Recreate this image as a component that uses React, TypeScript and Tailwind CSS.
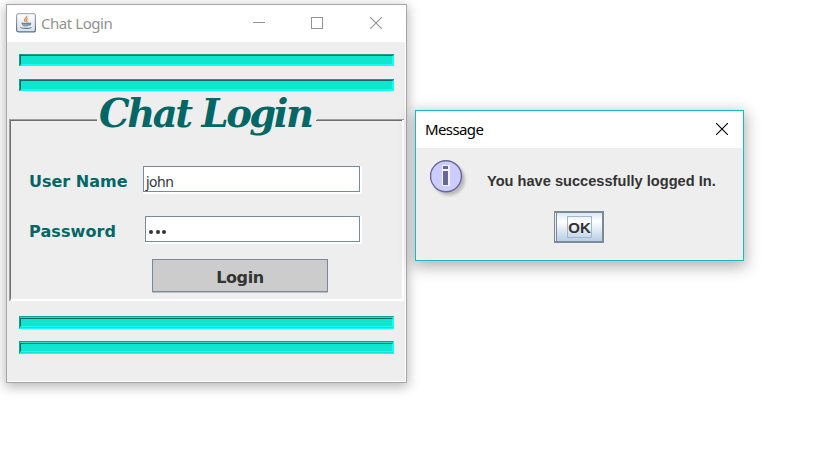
import React from "react";

function TopBar() {
  return (
    <div className="h-[12px] w-[375px] border-t border-l border-[#0ea192] bg-[#12e5cd]">
      <div className="h-[11px] w-[374px] border-t border-l border-r-2 border-b-2 border-t-[#0b6e64] border-l-[#0b6e64] border-r-[#12ffff] border-b-[#12ffff]" />
    </div>
  );
}

function BottomBar() {
  return (
    <div className="h-[13px] w-[375px] border border-t-[#0ea192] border-l-[#0ea192] border-r-[#12ffff] border-b-[#12ffff] bg-[#12e5cd] pt-px">
      <div className="h-[9px] w-[373px] border border-t-[#0b6e64] border-l-[#0b6e64] border-r-[#12ffff] border-b-[#12ffff]" />
    </div>
  );
}

function JavaIcon() {
  return (
    <svg width="20" height="20" viewBox="0 0 20 20" fill="none">
      <defs>
        <linearGradient id="javaFace" x1="0" y1="0" x2="0" y2="1">
          <stop offset="0" stopColor="#ffffff" />
          <stop offset="1" stopColor="#d9e0e7" />
        </linearGradient>
        <linearGradient id="javaEdge" x1="0" y1="0" x2="0" y2="1">
          <stop offset="0" stopColor="#a9b3bd" />
          <stop offset="1" stopColor="#587087" />
        </linearGradient>
      </defs>
      <rect x=".6" y=".6" width="18.8" height="18.3" rx="2" fill="url(#javaFace)" stroke="url(#javaEdge)" strokeWidth="1.2" />
      <path d="M10.7 2.8c.8 2-2.8 2.8-2.2 4.5.2.7 1 1.2 1 2M12 5.5c-2 .8-1.9 1.7-1.2 2.4.4.4.2 1-.3 1.4" stroke="#e98b4a" strokeWidth="1.3" />
      <path d="M5.5 10c1.5.7 6.5.6 8 0M6.5 10.5c.2 2 .8 2.5 3.2 2.5 2.2 0 2.8-.6 3.2-2.5M13.3 10.2c1.9-.5 1.9 1.6-.6 2" stroke="#6482a0" strokeWidth="1.2" />
      <path d="M7 11.7h5.5" stroke="#8ba1b6" strokeWidth="1.4" />
      <path d="M5 14.2c-1.3 1.4 9 1.7 10.5.1" stroke="#6482a0" strokeWidth="1.2" />
    </svg>
  );
}

function InfoIcon() {
  return (
    <svg width="40" height="40" viewBox="0 0 40 40" fill="none">
      <defs>
        <filter id="infoShade" x="-30%" y="-30%" width="160%" height="160%">
          <feGaussianBlur stdDeviation="1.5" />
        </filter>
      </defs>
      <circle cx="19" cy="19.5" r="16" fill="#888" opacity=".5" filter="url(#infoShade)" />
      <circle cx="16" cy="16.2" r="15.5" fill="#ccccff" stroke="#666699" strokeWidth="1.4" />
      <path d="M12 5h8v21h-8z" fill="#f1f1ff" />
      <path d="M13 6h5v3h-5zM13 11h5v14h-5z" fill="#666699" />
    </svg>
  );
}

function Cross() {
  return (
    <svg width="12" height="12" viewBox="0 0 12 12" fill="none" stroke="currentColor" strokeWidth="1.1">
      <path d="M0 0l12 12M12 0L0 12" />
    </svg>
  );
}

function Field({ children, wide }: { children: React.ReactNode; wide?: boolean }) {
  return (
    <div className={`h-[28px] bg-white pr-[2px] pb-[2px] ${wide ? "w-[219px]" : "w-[217px]"}`}>
      <div className="h-[26px] border border-[#7a8a99] bg-white pl-[2px]">{children}</div>
    </div>
  );
}

function LoginWindow() {
  return (
    <section className="absolute left-[6px] top-[4px] h-[379px] w-[401px] border border-[#a6a6a6] bg-white pr-px pb-px shadow-[0_3px_11px_1px_rgba(0,0,0,0.28)]">
      <div className="flex h-full flex-col bg-[#eeeeee]">
        <header className="-mr-px flex h-[37px] shrink-0 bg-white pl-[9px] text-[#929292]">
          <div className="pt-[8px]">
            <JavaIcon />
          </div>
          <span className="ml-[5px] w-[208px] pt-[8px] font-['Noto_Sans','Open_Sans',sans-serif] text-[15px] leading-[20px] tracking-[-0.45px]">
            Chat Login
          </span>
          <div className="ml-[4px] mt-[17px] h-px w-[12px] bg-current" />
          <div className="ml-[46px] mt-[12px] h-[12px] w-[12px] border border-current" />
          <div className="ml-[47px] pt-[12px]">
            <Cross />
          </div>
        </header>
        <div className="mt-[12px] ml-[12px] flex flex-col gap-[13px]">
          <TopBar />
          <TopBar />
        </div>
        <div className="ml-[2px] mt-[4px] flex h-[206px] w-[395px] flex-col">
          <div className="flex h-[25px] shrink-0 items-end">
            <div className="h-px w-[88px] bg-[#a0a0a0]" />
            <div className="flex h-[25px] w-[220px] items-start overflow-visible">
              <h1 className="whitespace-nowrap pl-[2px] font-['DejaVu_Serif',serif] text-[38.5px] leading-[37px] font-bold italic tracking-[-2.45px] text-[#006666]">
                Chat Login
              </h1>
            </div>
            <div className="h-px w-[87px] bg-[#a0a0a0]" />
          </div>
          <div className="flex h-[181px] border-l border-l-[#a0a0a0]">
            <div className="flex w-[394px] flex-col border-r-2 border-b-2 border-l border-l-[#707070] border-r-white border-b-white">
              <div className="flex h-px shrink-0 justify-between">
                <div className="h-px w-[86px] bg-[#707070]" />
                <div className="h-px w-[86px] bg-[#707070]" />
              </div>
              <div className="mt-[45px] flex h-[28px] pl-[18px]">
                <label className="w-[114px] whitespace-nowrap font-['DejaVu_Sans',sans-serif] text-[16px] leading-[31px] font-bold tracking-[0px] text-[#006666]">
                  User Name
                </label>
                <Field wide>
                  <span className="block font-['Noto_Sans','Open_Sans',sans-serif] text-[14px] leading-[29px] tracking-[-0.5px] text-[#333]">john</span>
                </Field>
              </div>
              <div className="mt-[22px] flex h-[28px] pl-[18px]">
                <label className="w-[116px] whitespace-nowrap font-['DejaVu_Sans',sans-serif] text-[16px] leading-[31px] font-bold tracking-[0.1px] text-[#006666]">
                  Password
                </label>
                <Field>
                  <div className="flex h-full items-center gap-[2.5px] pl-px pt-[5px]">
                    <i className="size-[4px] rounded-full bg-[#333]" />
                    <i className="size-[4px] rounded-full bg-[#333]" />
                    <i className="size-[4px] rounded-full bg-[#333]" />
                  </div>
                </Field>
              </div>
              <div className="mt-[15px] ml-[141px] h-[34px] w-[176px] bg-[#bfc3c7] pb-px">
                <button className="block h-[33px] w-[176px] border border-[#7a8a99] bg-[#cccccc] pt-px font-['DejaVu_Sans',sans-serif] text-[16px] leading-[34px] font-bold tracking-[-0.4px] text-[#333]">
                  Login
                </button>
              </div>
            </div>
          </div>
        </div>
        <div className="mt-[15px] ml-[12px] flex flex-col gap-[12px]">
          <BottomBar />
          <BottomBar />
        </div>
      </div>
    </section>
  );
}

function MessageWindow() {
  return (
    <section className="absolute left-[415px] top-[110px] h-[151px] w-[329px] border border-[#16bac5] bg-[#eeeeee] shadow-[0_4px_14px_2px_rgba(0,0,0,0.3)]">
      <header className="flex h-[37px] justify-between bg-white pl-[9px] pr-[15px] text-black">
        <span className="pt-[8px] font-['Noto_Sans','Open_Sans',sans-serif] text-[15px] leading-[20px] tracking-[-0.6px]">
          Message
        </span>
        <div className="pt-[12px]">
          <Cross />
        </div>
      </header>
      <div className="flex h-[63px] pl-[14px] pt-[12px]">
        <InfoIcon />
        <p className="ml-[17px] pt-[11px] whitespace-nowrap font-['Liberation_Sans',sans-serif] text-[14.6px] leading-[20px] font-bold tracking-[0.01px] text-[#333]">
          You have successfully logged In.
        </p>
      </div>
      <button className="ml-[138px] block h-[32px] w-[50px] border-2 border-l border-[#7a8a99] bg-[#eeeeee] pl-px">
        <span className="flex h-[28px] items-center justify-center border-l border-[#7a8a99] bg-linear-to-b from-[#dde8f3] via-white via-30% to-[#b8cfe5]">
          <span className="h-[22px] w-[25px] border border-[#a3b8cc] font-['Liberation_Sans',sans-serif] text-[15px] leading-[22px] font-bold text-[#333]">
            OK
          </span>
        </span>
      </button>
    </section>
  );
}

export default function App() {
  return (
    <main className="relative h-[451px] w-[836px] overflow-hidden bg-white">
      <LoginWindow />
      <MessageWindow />
    </main>
  );
}
